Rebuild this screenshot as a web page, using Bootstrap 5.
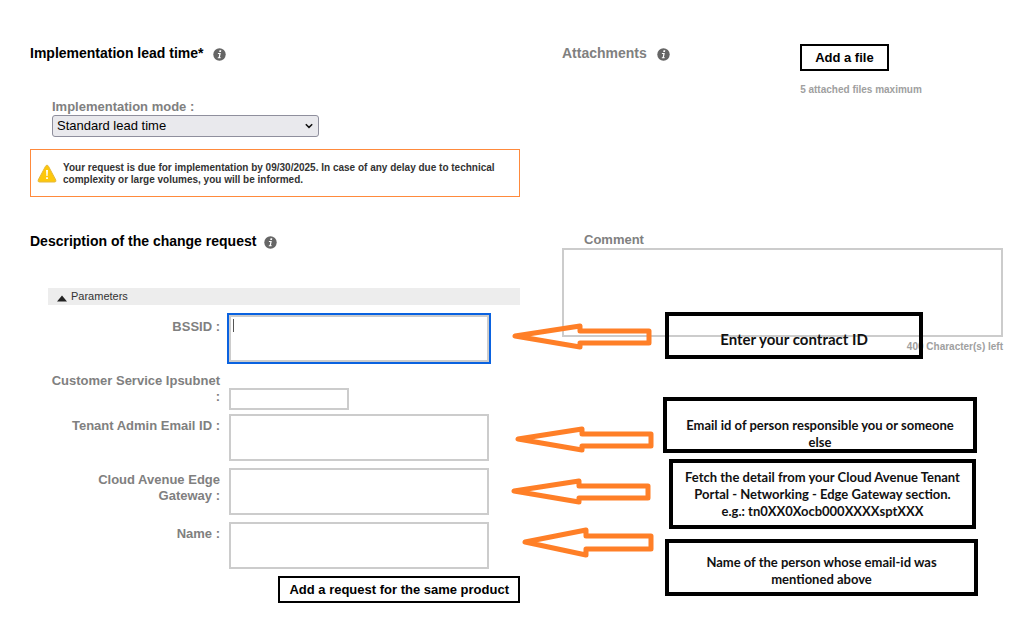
<!DOCTYPE html>
<html lang="en">
<head>
<meta charset="utf-8">
<meta name="viewport" content="width=device-width, initial-scale=1">
<title>Change request</title>
<link href="https://cdn.jsdelivr.net/npm/bootstrap@5.3.0/dist/css/bootstrap.min.css" rel="stylesheet">
<style>
body{font-family:"Liberation Sans",Arial,sans-serif;font-size:13px;line-height:16px;color:#333;background:#fff}
.request-form{display:grid;grid-template-columns:minmax(0,490fr) minmax(0,441fr);column-gap:42px;row-gap:35px;padding:44px 21px 28px 30px}
.section-title{font-size:14px;line-height:18px;font-weight:700;color:#000;margin:0}
.section-title.muted-title,.field-label{color:#808080}
.field-label{font-weight:700;font-size:13px;line-height:16px}
.info-dot{width:13px;height:13px;flex:none;margin:2px 0 0 10px}
.mode{margin:37px 0 0 22px}
.mode .form-select{width:267px;height:22px;margin-top:0;padding:0 24px 1px 4px;font-size:13px;line-height:19px;color:#000;background-color:#e9e9ed;border:1px solid #8f8f9d;border-radius:3px;background-image:url("data:image/svg+xml,%3csvg xmlns='http://www.w3.org/2000/svg' viewBox='0 0 8 6'%3e%3cpath fill='none' stroke='%23111' stroke-width='1.5' d='M.8 1.2 4 4.4 7.2 1.2'/%3e%3c/svg%3e");background-size:8px 6px;background-position:right 5px center}
.notice{margin-top:12px;padding:12px 8px 10px 6px;gap:6px;border:1px solid #ff8a3c;border-radius:0;font-size:10px;line-height:12px;font-weight:700;color:#333;min-height:48px}
.notice svg{width:20px;height:19px;flex:none;margin-top:2px}
.btn-outline-ink{border:2px solid #000;border-radius:0;background:#fff;color:#000;font-weight:700;font-size:13px;line-height:16px;height:27px;padding:3px 9px}
.btn-outline-ink.file-btn{padding:3px 13px}
.hint{font-size:10px;line-height:12px;font-weight:700;color:#a0a0a0}
.file-hint{margin-top:13px}
.files{flex:0 0 46%}
.params-bar{margin:38px 0 10px 18px;height:17px;padding:0 0 0 9px;background:#ededed;border:0;color:#333;font-size:11px;line-height:15px;text-align:left}
.params-bar svg{width:10px;height:7px}
.param-row{display:flex;gap:9px;margin:0 0 7px 18px}
.param-row .field-label{width:172px;padding-top:4px;text-align:right}
.param-row.short-row{margin-bottom:4px}
.short-row .form-control{width:120px;height:22px;margin-top:19px}
.form-control{border:2px solid #ccc;border-radius:0;padding:2px 3px;font-size:13px;resize:none}
.param-row textarea.form-control{width:260px;height:47px;min-height:0}
.form-control:focus,.is-current{border-color:#ccc;box-shadow:0 0 0 2px #0a62e0;outline:0}
.param-row .is-current,.param-row .is-current:focus{caret-color:transparent;background:linear-gradient(#555,#555) 2px 2px/1px 13px no-repeat #fff}
.comment-label{padding-left:22px}
.comment-box{height:89px}
.callout-layer{position:absolute;inset:0;pointer-events:none}
.pointer{position:absolute;overflow:visible;fill:none;stroke:#ff7f27;stroke-width:5;stroke-linejoin:round}
.callout{position:absolute;border:4px solid #000;font-family:Lato,sans-serif;font-weight:700;font-size:13px;line-height:17px;color:#111;text-align:center;display:flex;align-items:center;justify-content:center}
.callout-short{font-size:15px;padding-top:8px}
.callout-low{padding:18px 14px 0}
.callout-mid{padding:6px 32px 0}
</style>
</head>
<body>
<svg class="d-none" aria-hidden="true">
  <symbol id="info" viewBox="0 0 13 13"><circle cx="6.5" cy="6.5" r="6.2" fill="#666"/><path fill="#fff" d="M6.5 2.3h1.8L8 4H6.2zM5 5h2.8L6.9 9.2h.9l-.2 1H4.7l.2-1h.8l.6-3.2h-1.5z"/></symbol>
</svg>
<main>
<form class="request-form">
  <section>
    <h2 class="section-title d-flex align-items-center">Implementation lead time* <svg class="info-dot"><use href="#info"/></svg></h2>
    <div class="mode">
      <label class="field-label d-block" for="mode">Implementation mode :</label>
      <select class="form-select" id="mode"><option>Standard lead time</option></select>
    </div>
    <div class="notice alert d-flex mb-0" role="alert">
      <svg viewBox="0 0 20 19" aria-hidden="true"><path d="M10 1.2 Q11 1.2 11.6 2.5L18.8 16Q19.4 18 17.6 18H2.4Q.6 18 1.2 16L8.4 2.5Q9 1.2 10 1.2z" fill="#fdc70c" stroke="#e5b93c"/><path d="M9 6h2l-.4 6H9.4zM9.1 13.3h1.8v1.8H9.1z" fill="#fff"/></svg>
      <span>Your request is due for implementation by 09/30/2025. In case of any delay due to technical complexity or large volumes, you will be informed.</span>
    </div>
  </section>
  <section class="d-flex justify-content-between">
    <h2 class="section-title muted-title d-flex align-items-center align-self-start">Attachments <svg class="info-dot"><use href="#info"/></svg></h2>
    <div class="files">
      <button type="button" class="btn btn-outline-ink file-btn d-block">Add a file</button>
      <div class="hint file-hint">5 attached files maximum</div>
    </div>
  </section>
  <section>
    <h2 class="section-title d-flex align-items-center">Description of the change request <svg class="info-dot ms-2"><use href="#info"/></svg></h2>
    <div class="d-flex"><button type="button" class="params-bar flex-fill d-flex align-items-center gap-1"><svg viewBox="0 0 10 7" class="mt-1"><path d="M0 6.5 5 .5l5 6z" fill="#222"/></svg>Parameters</button></div>
    <div class="param-row"><label class="field-label" for="bssid">BSSID :</label><textarea class="form-control is-current" id="bssid" autofocus></textarea></div>
    <div class="param-row short-row"><label class="field-label" for="subnet">Customer Service Ipsubnet :</label><input class="form-control" id="subnet" type="text"></div>
    <div class="param-row"><label class="field-label" for="email">Tenant Admin Email ID :</label><textarea class="form-control" id="email"></textarea></div>
    <div class="param-row"><label class="field-label" for="gateway">Cloud Avenue Edge Gateway :</label><textarea class="form-control" id="gateway"></textarea></div>
    <div class="param-row"><label class="field-label" for="person">Name :</label><textarea class="form-control" id="person"></textarea></div>
    <div class="text-end"><button type="button" class="btn btn-outline-ink">Add a request for the same product</button></div>
  </section>
  <section class="position-relative">
    <label class="field-label comment-label d-block" for="comment">Comment</label>
    <textarea class="form-control comment-box" id="comment"></textarea>
    <div class="hint text-end mt-1">400 Character(s) left</div>
    <div class="callout-layer">
      <svg class="pointer" style="left:-50px;top:91px" width="139" height="26"><path d="M3 13 68 3v5h69v12H68v4z"/></svg>
      <svg class="pointer" style="left:-47px;top:194px" width="139" height="26"><path d="M3 13 67 3v5h69v12H67v4z"/></svg>
      <svg class="pointer" style="left:-51px;top:246px" width="139" height="26"><path d="M3 13 68 3v5h69v12H68v4z"/></svg>
      <svg class="pointer" style="left:-40px;top:295px" width="132" height="30"><path d="M3 15 64 3v6h65v13H64v6z"/></svg>
      <div class="callout callout-short" style="left:103px;top:80px;width:258px;height:47px">Enter your contract ID</div>
      <div class="callout callout-low" style="left:101px;top:165px;width:314px;height:56px">Email id of person responsible you or someone else</div>
      <div class="callout" style="left:107px;top:227px;width:307px;height:70px"><span>Fetch the detail from your Cloud Avenue Tenant Portal - Networking - Edge Gateway section.<br>e.g.: tn0XX0Xocb000XXXXsptXXX</span></div>
      <div class="callout callout-mid" style="left:103px;top:307px;width:313px;height:57px">Name of the person whose email-id was mentioned above</div>
    </div>
  </section>
</form>
</main>
<script src="https://cdn.jsdelivr.net/npm/bootstrap@5.3.0/dist/js/bootstrap.bundle.min.js"></script>
</body>
</html>
